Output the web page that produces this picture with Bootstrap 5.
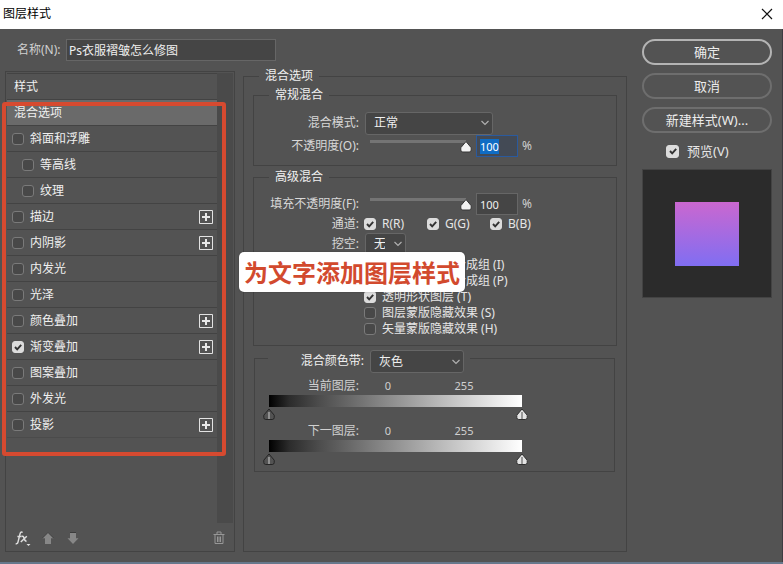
<!DOCTYPE html>
<html lang="zh-CN">
<head>
<meta charset="utf-8">
<meta name="viewport" content="width=device-width, initial-scale=1">
<title>图层样式</title>
<link href="https://cdn.jsdelivr.net/npm/bootstrap@5.3.0/dist/css/bootstrap.min.css" rel="stylesheet">
<style>
  body { font: 12px/18px "Noto Sans", "Noto Sans CJK SC", sans-serif; color: #e6e6e6; background: #535353; border-bottom: 2px solid #66788c; }
  .titlebar { height: 29px; padding: 0 9px 2px 3px; color: #000; font-size: 12px; }
  .close-btn { width: 14px; height: 14px; line-height: 0; }
  .dialog { padding: 10px 10px 10px 5px; gap: 15px; border-right: 1px solid #3e3c42; }
  .name-row { padding-left: 12px; gap: 6px; }
  .name-row label { width: 43px; color: #d0d0d0; white-space: nowrap; }
  .field { height: 22px; padding: 0 3px; color: #f0f0f0; background: #454545; border: 1px solid #666; border-radius: 0; outline: 0; font-size: 12px; }
  .name-field { width: 210px; padding: 0 2px; }
  .num-field { width: 42px; margin-left: 4px; font-size: 11px; }
  .num-field.editing { border: 1px solid #2a5a9e; background: #434a55; }
  .num-field::selection, .num-field.editing::selection { background: #0f6cc4; color: #fff; }

  .styles-panel { flex: 0 0 230px; margin-top: 10px; padding: 1px; border: 1px solid #434343; }
  .style-list { border-top: 1px solid #434343; }
  .style-row { height: 26px; padding: 0 4px 0 5px; gap: 6px; border-bottom: 1px solid #434343; color: #f0f0f0; }
  .style-row.heading-row { padding-left: 7px; }
  .style-row.selected { background: #6a6a6a; }
  .style-row.nested { padding-left: 15px; }
  .style-row.final { border-bottom-color: #4b4b4b; }
  .scroll-rail { width: 16px; background: #4a4a4a; }
  .tool-row { height: 27px; padding: 3px 8px 0; gap: 13px; }
  .icon-btn { padding: 0; border: 0; background: none; line-height: 0; color: inherit; }
  .highlight-box { left: -4px; right: 8px; top: 30px; height: 354px; border: 4px solid #d64a30; border-radius: 3px; pointer-events: none; }

  .tick { appearance: none; flex: none; width: 12px; height: 12px; margin: 0; border: 1px solid #7a7a7a; border-radius: 3px; background: #484848; }
  .tick:checked { border-color: #dcdcdc; background: #dcdcdc url("data:image/svg+xml,%3Csvg xmlns='http://www.w3.org/2000/svg' viewBox='0 0 10 10'%3E%3Cpath d='M2 5l2.2 2.4L8.2 2.8' fill='none' stroke='%23333' stroke-width='1.9'/%3E%3C/svg%3E") center/10px no-repeat; }

  .group { border: 1px solid #434343; min-width: 0; }
  .group > legend { float: none; width: auto; margin: 0 0 0 15px; padding: 0 6px; font-size: 12px; line-height: 18px; height: 18px; color: #f0f0f0; }
  .group.outer-group > legend { margin-left: 6px; }
  .outer-group { margin-top: 6px; padding: 1px 9px 0; }
  .plain-group { padding: 7px 0 8px; margin-bottom: 2px; }
  .band-group { margin: 4px 2px 0 1px; padding: 11px 92px 4px 14px; }
  .group > .band-legend { width: 202px; height: 16px; margin-left: -1px; padding: 0; gap: 6px; }
  .band-legend label { width: 96px; line-height: 22px; }
  .lab { flex: none; width: 105px; text-align: right; margin-right: 6px; color: #d8d8d8; white-space: nowrap; }
  .line24 { height: 24px; }
  .line22 { height: 22px; }
  .line18 { height: 18px; }
  .line16 { height: 16px; }
  .indent { padding: 2px 0 0 110px; }
  .opt { gap: 6px; white-space: nowrap; }
  .channel { width: 63px; }
  .shift-left { margin-left: -1px; }
  .drop { appearance: none; height: 23px; padding: 0 20px 0 8px; color: #f0f0f0; border: 1px solid #666; border-radius: 3px; font-size: 12px; background: #454545 url("data:image/svg+xml,%3Csvg xmlns='http://www.w3.org/2000/svg' viewBox='0 0 8 6'%3E%3Cpath d='M.5 1L4 4.500 7.500 1' fill='none' stroke='%23b0b0b0' stroke-width='1.2'/%3E%3C/svg%3E") right 3px center/8px 6px no-repeat; }
  .drop-wide { width: 128px; }
  .drop-mid { width: 94px; }
  .drop-small { width: 41px; }

  .slide { appearance: none; width: 107px; height: 14px; margin: 0; background: none; }
  .slide::-webkit-slider-runnable-track { height: 14px; background: linear-gradient(#747474, #747474) 5px 1px / calc(100% - 11px) 3px no-repeat; }
  .slide::-webkit-slider-thumb { appearance: none; width: 12px; height: 14px; border: 0; background: url("data:image/svg+xml,%3Csvg xmlns='http://www.w3.org/2000/svg' viewBox='0 0 12 14'%3E%3Cpath d='M6 2.500L11.200 8.700V11q0 2-2 2H2.800q-2 0-2-2V8.700z' fill='%23f2f2f2' stroke='%23363636'/%3E%3C/svg%3E") center/12px 14px no-repeat; }
  .unit { margin-left: 4px; color: #d0d0d0; }

  .ramp { height: 12px; background: linear-gradient(90deg, #000, #2c2c2c 8%, #4d4d4d 20%, #808080 42%, #b8b8b8 67%, #fff); }
  .band-values { color: #d0d0d0; }
  .band-name { width: 90px; text-align: right; }
  .band-num { width: 58px; text-align: center; font-size: 11px; }
  .band-num + .band-num { width: 94px; }
  .stops { height: 15px; margin: 0 -6px; display: grid; }
  .stops input { grid-area: 1 / 1; appearance: none; width: 100%; height: 15px; margin: 0; background: none; pointer-events: none; }
  .stops input::-webkit-slider-runnable-track { height: 15px; background: none; }
  .stops input::-webkit-slider-thumb { appearance: none; pointer-events: auto; width: 12px; height: 14px; border: 0; background: url("data:image/svg+xml,%3Csvg xmlns='http://www.w3.org/2000/svg' viewBox='0 0 12 14'%3E%3Cpath d='M6 2L11.200 8.200V10.500q0 2-2 2H2.800q-2 0-2-2V8.200z' fill='%23e4e4e4' stroke='%23303030'/%3E%3Cpath d='M6 5v7' stroke='%23999' stroke-width='2'/%3E%3C/svg%3E") center/12px 14px no-repeat; }
  .stops input.dark-stop::-webkit-slider-thumb { background-image: url("data:image/svg+xml,%3Csvg xmlns='http://www.w3.org/2000/svg' viewBox='0 0 12 14'%3E%3Cpath d='M6 2L11.200 8.200V10.500q0 2-2 2H2.800q-2 0-2-2V8.200z' fill='%23535353' stroke='%23242424'/%3E%3Cpath d='M6 5v7' stroke='%23909090' stroke-width='2'/%3E%3C/svg%3E"); }

  .callout-tag { left: 234px; top: 213px; padding: 0 5px; height: 40px; line-height: 42px; border-radius: 5px; background: #fff; color: #d24a2e; font-size: 24px; font-weight: 700; white-space: nowrap; z-index: 2; box-shadow: 0 0 2px #0004; }

  .actions { flex: 0 0 130px; gap: 8px; font-size: 13px; }
  .pill { height: 26px; padding: 0; border: 2px solid #6e6e6e; border-radius: 13px; color: #ececec; font-size: 13px; line-height: 20px; }
  .pill.main-pill { border-color: #b4b4b4; }
  .preview-check { gap: 8px; height: 20px; padding-left: 24px; }
  .preview-check .tick { width: 13px; height: 13px; }
  .preview-box { height: 129px; background: #2b2b2b; border: 1px solid #434343; }
  .swatch { width: 64px; height: 64px; background: linear-gradient(#ca67d0, #806ef2); }
</style>
</head>
<body class="d-flex flex-column min-vh-100">
<header class="titlebar bg-white d-flex align-items-center justify-content-between">
  <span>图层样式</span>
  <button class="icon-btn close-btn" type="button" aria-label="关闭"><svg width="12" height="12" viewBox="0 0 12 12"><path d="M1 1l10 10M11 1L1 11" stroke="#111" stroke-width="1.2"/></svg></button>
</header>
<main class="dialog d-flex flex-grow-1">
  <section class="position-relative d-flex flex-column flex-grow-1">
    <div class="name-row d-flex align-items-center">
      <label for="styleName">名称(N):</label>
      <input class="field name-field" id="styleName" type="text" value="Ps衣服褶皱怎么修图">
    </div>
    <div class="d-flex flex-grow-1 gap-2">
      <nav class="styles-panel position-relative d-flex flex-column" aria-label="样式">
        <div class="d-flex flex-grow-1">
          <div class="style-list flex-grow-1">
            <div class="style-row heading-row d-flex align-items-center">样式</div>
            <div class="style-row heading-row selected d-flex align-items-center">混合选项</div>
            <div class="style-row d-flex align-items-center"><input class="tick" type="checkbox" id="s1"><label for="s1">斜面和浮雕</label></div>
            <div class="style-row nested d-flex align-items-center"><input class="tick" type="checkbox" id="s2"><label for="s2">等高线</label></div>
            <div class="style-row nested d-flex align-items-center"><input class="tick" type="checkbox" id="s3"><label for="s3">纹理</label></div>
            <div class="style-row d-flex align-items-center"><input class="tick" type="checkbox" id="s4"><label for="s4">描边</label><button class="icon-btn ms-auto" type="button" aria-label="添加描边"><svg width="14" height="14"><use href="#plus"/></svg></button></div>
            <div class="style-row d-flex align-items-center"><input class="tick" type="checkbox" id="s5"><label for="s5">内阴影</label><button class="icon-btn ms-auto" type="button" aria-label="添加内阴影"><svg width="14" height="14"><use href="#plus"/></svg></button></div>
            <div class="style-row d-flex align-items-center"><input class="tick" type="checkbox" id="s6"><label for="s6">内发光</label></div>
            <div class="style-row d-flex align-items-center"><input class="tick" type="checkbox" id="s7"><label for="s7">光泽</label></div>
            <div class="style-row d-flex align-items-center"><input class="tick" type="checkbox" id="s8"><label for="s8">颜色叠加</label><button class="icon-btn ms-auto" type="button" aria-label="添加颜色叠加"><svg width="14" height="14"><use href="#plus"/></svg></button></div>
            <div class="style-row d-flex align-items-center"><input class="tick" type="checkbox" id="s9" checked><label for="s9">渐变叠加</label><button class="icon-btn ms-auto" type="button" aria-label="添加渐变叠加"><svg width="14" height="14"><use href="#plus"/></svg></button></div>
            <div class="style-row d-flex align-items-center"><input class="tick" type="checkbox" id="s10"><label for="s10">图案叠加</label></div>
            <div class="style-row d-flex align-items-center"><input class="tick" type="checkbox" id="s11"><label for="s11">外发光</label></div>
            <div class="style-row final d-flex align-items-center"><input class="tick" type="checkbox" id="s12"><label for="s12">投影</label><button class="icon-btn ms-auto" type="button" aria-label="添加投影"><svg width="14" height="14"><use href="#plus"/></svg></button></div>
          </div>
          <div class="scroll-rail"></div>
        </div>
        <div class="tool-row d-flex align-items-center">
          <button class="icon-btn" type="button" aria-label="效果"><svg width="14" height="18" viewBox="0 0 14 18" overflow="visible" fill="none" stroke="#dedede"><path d="M7.600 3.600Q5.800 2 5 5L3 13Q2.400 15.300.700 14.500M2.400 7.500h4" stroke-width="1.4"/><path d="M6.500 7.500Q8.300 6.500 9 9.200T11.500 12.500M11.800 7.200L5.800 13" stroke-width="1.500"/><path d="M11.500 15h4l-2 2z" fill="#dedede" stroke="none"/></svg></button>
          <button class="icon-btn" type="button" aria-label="上移"><svg width="12" height="12" viewBox="0 0 12 12"><path d="M6 .5l5.500 5.700H9V12H3V6.200H.5z" fill="#878787"/><path d="M.5 6L6 .5 11.500 6" fill="none" stroke="#3c3c3c" stroke-width=".8"/></svg></button>
          <button class="icon-btn" type="button" aria-label="下移"><svg width="12" height="12" viewBox="0 0 12 12"><path d="M6 12L.5 6.200H3V.5h6v5.700h2.500z" fill="#878787"/><path d="M3 .5h6" stroke="#3c3c3c"/></svg></button>
          <button class="icon-btn ms-auto" type="button" aria-label="删除"><svg width="12" height="14" viewBox="0 0 12 14" fill="none" stroke="#979797"><path d="M.5 3.500h11M4 3V1h4v2M2 3.500v9h8v-9M4.500 5.500v5.500M6 5.500v5.500M7.500 5.500v5.500"/></svg></button>
        </div>
        <div class="highlight-box position-absolute"></div>
      </nav>

      <fieldset class="group outer-group flex-grow-1">
        <legend>混合选项</legend>
        <fieldset class="group plain-group">
          <legend>常规混合</legend>
          <div class="line24 d-flex align-items-center"><label class="lab" for="mode">混合模式:</label><select class="drop drop-wide" id="mode"><option>正常</option></select></div>
          <div class="line22 d-flex align-items-center"><label class="lab" for="opacity">不透明度(O):</label><input class="slide" type="range" aria-label="不透明度滑块" value="100"><input class="field num-field editing" id="opacity" type="text" value="100"><span class="unit">%</span></div>
        </fieldset>
        <fieldset class="group plain-group">
          <legend>高级混合</legend>
          <div class="line22 d-flex align-items-center"><label class="lab" for="fill">填充不透明度(F):</label><input class="slide" type="range" aria-label="填充不透明度滑块" value="100"><input class="field num-field" id="fill" type="text" value="100"><span class="unit">%</span></div>
          <div class="line18 d-flex align-items-center">
            <span class="lab">通道:</span>
            <span class="channel opt shift-left d-flex align-items-center"><input class="tick" type="checkbox" id="cr" checked><label for="cr">R(R)</label></span>
            <span class="channel opt d-flex align-items-center"><input class="tick" type="checkbox" id="cg" checked><label for="cg">G(G)</label></span>
            <span class="channel opt d-flex align-items-center"><input class="tick" type="checkbox" id="cb" checked><label for="cb">B(B)</label></span>
          </div>
          <div class="line22 d-flex align-items-center"><label class="lab" for="knock">挖空:</label><select class="drop drop-small" id="knock"><option>无</option></select></div>
          <div class="indent">
            <div class="opt line16 d-flex align-items-center"><input class="tick" type="checkbox" id="o1"><label for="o1">将内部效果混合成组 (I)</label></div>
            <div class="opt line16 d-flex align-items-center"><input class="tick" type="checkbox" id="o2" checked><label for="o2">将剪贴图层混合成组 (P)</label></div>
            <div class="opt line16 d-flex align-items-center"><input class="tick" type="checkbox" id="o3" checked><label for="o3">透明形状图层 (T)</label></div>
            <div class="opt line16 d-flex align-items-center"><input class="tick" type="checkbox" id="o4"><label for="o4">图层蒙版隐藏效果 (S)</label></div>
            <div class="opt line16 d-flex align-items-center"><input class="tick" type="checkbox" id="o5"><label for="o5">矢量蒙版隐藏效果 (H)</label></div>
          </div>
        </fieldset>
        <fieldset class="group band-group">
          <legend class="band-legend d-flex align-items-start"><label class="text-end" for="band">混合颜色带:</label><select class="drop drop-mid" id="band"><option>灰色</option></select></legend>
          <div class="band-values line18 d-flex align-items-center"><span class="band-name">当前图层:</span><span class="band-num">0</span><span class="band-num">255</span></div>
          <div class="ramp"></div>
          <div class="stops"><input class="dark-stop" type="range" max="255" value="0" aria-label="当前图层阴影"><input type="range" max="255" value="255" aria-label="当前图层高光"></div>
          <div class="band-values line18 d-flex align-items-center"><span class="band-name">下一图层:</span><span class="band-num">0</span><span class="band-num">255</span></div>
          <div class="ramp"></div>
          <div class="stops"><input class="dark-stop" type="range" max="255" value="0" aria-label="下一图层阴影"><input type="range" max="255" value="255" aria-label="下一图层高光"></div>
        </fieldset>
      </fieldset>
    </div>
    <div class="callout-tag position-absolute">为文字添加图层样式</div>
  </section>

  <aside class="actions d-flex flex-column">
    <button class="btn pill main-pill" type="button">确定</button>
    <button class="btn pill" type="button">取消</button>
    <button class="btn pill" type="button">新建样式(W)...</button>
    <div class="preview-check d-flex align-items-center"><input class="tick" type="checkbox" id="pv" checked><label for="pv">预览(V)</label></div>
    <div class="preview-box d-flex align-items-center justify-content-center"><div class="swatch"></div></div>
  </aside>
</main>
<svg class="d-none"><symbol id="plus" viewBox="0 0 14 14"><path d="M.5.500h13v13H.500z" fill="none" stroke="#e2e2e2"/><path d="M7 3v8M3 7h8" stroke="#e8e8e8" stroke-width="2"/></symbol></svg>
<script src="https://cdn.jsdelivr.net/npm/bootstrap@5.3.0/dist/js/bootstrap.bundle.min.js"></script>
<script>
  const opacity = document.getElementById('opacity');
  opacity.focus({ preventScroll: true });
  opacity.select();
</script>
</body>
</html>
